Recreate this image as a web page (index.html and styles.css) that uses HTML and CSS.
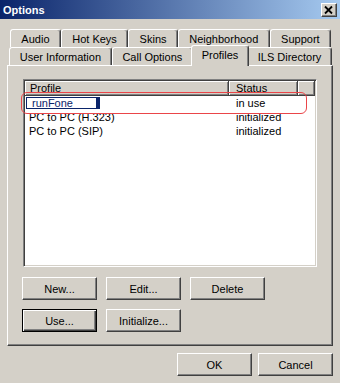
FILE: index.html
```html
<!DOCTYPE html>
<html>
<head>
  <meta charset="UTF-8">
  <title>Options</title>
  <link rel="stylesheet" href="styles.css">
</head>
<body>
  <div class="window">
    <div class="titlebar">
      <span class="title">Options</span>
      <button class="close-btn" aria-label="Close">
        <svg width="14" height="12" viewBox="0 0 14 12">
          <path d="M3 2.5 L10 9.5 M10 2.5 L3 9.5" stroke="#000" stroke-width="1.8" fill="none"/>
        </svg>
      </button>
    </div>

    <div class="tabs">
      <div class="tab-row back">
        <div class="tab">Audio</div>
        <div class="tab">Hot Keys</div>
        <div class="tab">Skins</div>
        <div class="tab">Neighborhood</div>
        <div class="tab">Support</div>
      </div>
      <div class="tab-row front">
        <div class="tab">User Information</div>
        <div class="tab">Call Options</div>
        <div class="tab active">Profiles</div>
        <div class="tab">ILS Directory</div>
      </div>
    </div>

    <div class="panel">
      <div class="list-wrap">
        <div class="listview">
          <div class="list-header">
            <div class="hcell col-profile">Profile</div>
            <div class="hcell col-status">Status</div>
            <div class="hcell col-fill"></div>
          </div>
          <div class="list-row">
            <div class="cell-profile editing"><span class="rename">runFone</span></div>
            <div class="cell-status">in use</div>
          </div>
          <div class="list-row">
            <div class="cell-profile">PC to PC (H.323)</div>
            <div class="cell-status">initialized</div>
          </div>
          <div class="list-row">
            <div class="cell-profile">PC to PC (SIP)</div>
            <div class="cell-status">initialized</div>
          </div>
        </div>
        <div class="callout"></div>
      </div>

      <div class="button-grid">
        <button class="btn">New...</button>
        <button class="btn">Edit...</button>
        <button class="btn">Delete</button>
        <button class="btn default">Use...</button>
        <button class="btn">Initialize...</button>
      </div>
    </div>

    <div class="dialog-buttons">
      <button class="btn">OK</button>
      <button class="btn">Cancel</button>
    </div>
  </div>
</body>
</html>
```

FILE: styles.css
```css
:root {
  --face: #d4d0c8;
  --light: #ffffff;
  --shadow: #808080;
  --dark: #404040;
  --navy: #0a246a;
}

* {
  box-sizing: border-box;
}

body {
  margin: 0;
  background-color: var(--face);
  font-family: "Liberation Sans", Arial, sans-serif;
  font-size: 11px;
  color: #000;
}

.window {
  width: 340px;
  height: 383px;
  overflow: hidden;
}

/* Title bar */
.titlebar {
  height: 19px;
  display: flex;
  align-items: center;
  justify-content: space-between;
  padding: 0 3px 0 3px;
  background: linear-gradient(to right, #0a246a, #a6caf0);
}

.title {
  color: white;
  font-weight: bold;
  font-size: 11px;
}

.close-btn {
  width: 16px;
  height: 14px;
  padding: 0;
  display: flex;
  align-items: center;
  justify-content: center;
  background-color: var(--face);
  border: 1px solid;
  border-color: var(--light) var(--dark) var(--dark) var(--light);
  box-shadow: inset -1px -1px 0 var(--shadow);
}

/* Tabs */
.tabs {
  margin-top: 10px;
}

.tab-row {
  display: flex;
  height: 18px;
}

.tab-row.back {
  margin: 0 9px 0 10px;
}

.tab-row.front {
  margin: 0 8px 0 9px;
}

.tab {
  flex: 1 1 auto;
  display: flex;
  align-items: center;
  justify-content: center;
  white-space: nowrap;
  background-color: var(--face);
  border: 1px solid;
  border-bottom: none;
  border-color: var(--light) var(--dark) transparent var(--light);
  border-radius: 3px 3px 0 0;
  box-shadow: inset -1px 0 0 var(--shadow);
}

.tab.active {
  margin: -2px -2px -1px;
  padding-bottom: 2px;
  position: relative;
  z-index: 1;
}

/* Tab page */
.panel {
  margin: 0 7px;
  height: 281px;
  padding: 13px 0 0 15px;
  border: 1px solid;
  border-color: var(--light) var(--dark) var(--dark) var(--light);
  box-shadow: inset -1px -1px 0 var(--shadow);
}

.list-wrap {
  position: relative;
  width: 294px;
  height: 188px;
}

.listview {
  width: 294px;
  height: 188px;
  padding: 1px;
  background-color: white;
  border: 1px solid;
  border-color: var(--shadow) var(--light) var(--light) var(--shadow);
  box-shadow: inset 1px 1px 0 var(--dark), inset -1px -1px 0 var(--face);
}

.list-header {
  display: flex;
  height: 15px;
}

.hcell {
  height: 15px;
  display: flex;
  align-items: center;
  background-color: var(--face);
  border-right: 1px solid var(--dark);
  border-bottom: 1px solid var(--dark);
  box-shadow: inset 1px 1px 0 var(--light), inset -1px -1px 0 var(--shadow);
}

.col-profile {
  width: 204px;
  padding-left: 5px;
}

.col-status {
  width: 69px;
  padding-left: 7px;
}

.col-fill {
  flex: 1;
}

.list-row {
  display: flex;
  align-items: center;
  height: 14px;
}

.cell-profile {
  width: 204px;
  padding-left: 4px;
}

.cell-profile.editing {
  padding-left: 1px;
}

.cell-status {
  width: 69px;
  padding-left: 7px;
}

.rename {
  display: flex;
  align-items: center;
  width: 74px;
  height: 12px;
  padding-left: 5px;
  color: var(--navy);
  border: 1px solid var(--navy);
  border-right-width: 4px;
}

/* red annotation ring around the edited row */
.callout {
  position: absolute;
  left: -2px;
  top: 13px;
  width: 286px;
  height: 22px;
  border: 1.5px solid #ea4549;
  border-radius: 6px;
  pointer-events: none;
}

/* Buttons */
.button-grid {
  display: grid;
  grid-template-columns: repeat(3, 75px);
  grid-auto-rows: 23px;
  gap: 9px;
  margin: 10px 0 0 -1px;
}

.btn {
  width: 75px;
  height: 23px;
  padding: 0;
  font: inherit;
  color: #000;
  background-color: var(--face);
  border: 1px solid;
  border-color: var(--light) var(--dark) var(--dark) var(--light);
  box-shadow: inset -1px -1px 0 var(--shadow);
}

.btn.default {
  border-color: #000;
  box-shadow: inset 1px 1px 0 var(--light), inset -1px -1px 0 var(--dark), inset -2px -2px 0 var(--shadow);
}

.dialog-buttons {
  display: flex;
  justify-content: flex-end;
  gap: 6px;
  margin-top: 7px;
  padding-right: 7px;
}
```
